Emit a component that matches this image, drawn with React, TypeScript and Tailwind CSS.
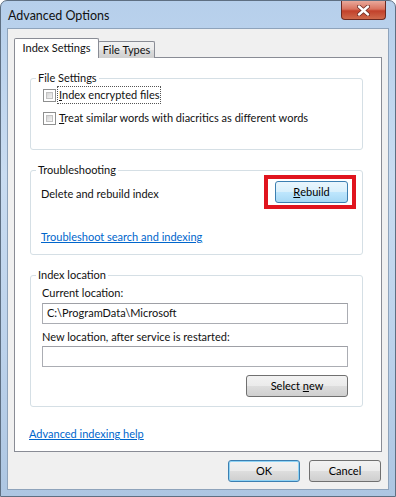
import React from "react";

const font = { fontFamily: 'Lato, "Noto Sans", sans-serif' };

function Checkbox({ label, mnemonic, focused }: { label: string; mnemonic: string; focused?: boolean }) {
  return (
    <div className="flex items-center h-[16px]">
      <div className="w-[13px] h-[13px] border border-[#8e8f8f] bg-white p-[2px] mr-[1px]">
        <div className="w-full h-full border border-[#c2c2c2] bg-[linear-gradient(135deg,#d4d4d4_0%,#f4f4f4_100%)]" />
      </div>
      <span className={focused ? "px-[1px] border border-dotted border-[#555]" : "px-[1px] border border-transparent"}>
        <span className="underline">{mnemonic}</span>
        {label}
      </span>
    </div>
  );
}

function Button({ children, className, variant }: { children: React.ReactNode; className: string; variant?: "hot" | "default" }) {
  let skin =
    "border-[#707070] bg-[linear-gradient(180deg,#f2f2f2_0%,#ebebeb_48%,#dddddd_52%,#cfcfcf_100%)]";
  if (variant === "hot")
    skin = "border-[#3c7fb1] bg-[linear-gradient(180deg,#eaf6fd_0%,#d9f0fc_48%,#bee6fd_52%,#a7d9f5_100%)]";
  if (variant === "default")
    skin = "border-[#3c7fb1] shadow-[inset_0_0_0_1px_#8fd3f5] bg-[linear-gradient(180deg,#f2f2f2_0%,#ebebeb_48%,#dddddd_52%,#cfcfcf_100%)]";
  return (
    <div className={`flex items-center justify-center rounded-[3px] border text-black ${skin} ${className}`}>
      {children}
    </div>
  );
}

function Group({ title, className, children }: { title: string; className: string; children: React.ReactNode }) {
  return (
    <fieldset className={`border border-[#d5dfe5] rounded-[3px] ${className}`}>
      <legend className="ml-[5px] px-[2px] leading-[16px]">{title}</legend>
      {children}
    </fieldset>
  );
}

export default function App() {
  return (
    <div
      style={font}
      className="w-[396px] h-[497px] flex flex-col text-[11px] text-[#111] rounded-t-[7px] border border-[#5e6f82] bg-[linear-gradient(180deg,#b6cfeb_0%,#c9dcf1_35%,#bcd2eb_70%,#adc6e2_100%)]"
    >
      <div className="h-[27px] flex items-start">
        <span className="pl-[7px] pt-[6px] text-[12.5px] leading-[18px]">Advanced Options</span>
        <div className="ml-auto mr-[9px] w-[45px] h-[19px] flex items-center justify-center rounded-b-[4px] border border-t-0 border-[#6b2a22] bg-[linear-gradient(180deg,#e9a99b_0%,#d9735f_45%,#c2412b_55%,#cf6a4c_100%)]">
          <svg width="13" height="11" viewBox="0 0 13 11">
            <path d="M2 1.5 L11 9.5 M11 1.5 L2 9.5" stroke="#6b2a22" strokeWidth="4" strokeLinecap="round" />
            <path d="M2 1.5 L11 9.5 M11 1.5 L2 9.5" stroke="#ffffff" strokeWidth="2.4" strokeLinecap="round" />
          </svg>
        </div>
      </div>

      <div className="mx-[6px] mb-[6px] flex-1 border border-[#8ea3bb] bg-[#f0f0f0] flex flex-col pl-[6px] pr-[6px] pt-[9px]">
        <div className="flex items-end h-[20px] relative z-10 -mb-[1px]">
          <div className="h-[20px] w-[85px] bg-white border border-b-0 border-[#898c95] rounded-t-[2px] flex items-center justify-center">
            Index Settings
          </div>
          <div className="h-[17px] w-[57px] -ml-[1px] border border-[#898c95] border-b-0 rounded-t-[2px] bg-[linear-gradient(180deg,#f2f2f2_0%,#ebebeb_48%,#dddddd_52%,#cfcfcf_100%)] flex items-center justify-center">
            File Types
          </div>
        </div>

        <div className="h-[395px] w-[368px] bg-white border border-[#898c95] flex flex-col pl-[15px] pt-[12px]">
          <Group title="File Settings" className="w-[333px] h-[80px]">
            <div className="pl-[12px] pt-[1px] flex flex-col gap-[7px]">
              <Checkbox mnemonic="I" label="ndex encrypted files" focused />
              <Checkbox mnemonic="T" label="reat similar words with diacritics as different words" />
            </div>
          </Group>

          <Group title="Troubleshooting" className="w-[333px] h-[93px] mt-[12px]">
            <div className="pl-[10px] pr-[6px] flex flex-col">
              <div className="-mt-[3px] h-[34px] flex items-center justify-between">
                <span className="pt-[5px]">Delete and rebuild index</span>
                <div className="w-[92px] h-[34px] border-4 border-[#e0141e] flex items-center pl-[7px]">
                  <Button variant="hot" className="w-[73px] h-[22px]">
                    <span className="underline">R</span>ebuild
                  </Button>
                </div>
              </div>
              <span className="mt-[20px] leading-[16px] text-[#0066cc] underline">Troubleshoot search and indexing</span>
            </div>
          </Group>

          <Group title="Index location" className="w-[333px] h-[140px] mt-[12px]">
            <div className="pl-[11px] flex flex-col">
              <span className="mt-[2px] leading-[16px]">Current location:</span>
              <div className="mt-[2px] w-[306px] h-[21px] border border-[#abadb3] border-t-[#9ea0a6] bg-white flex items-center pl-[4px]">
                C:\ProgramData\Microsoft
              </div>
              <span className="mt-[5px] leading-[16px]">New location, after service is restarted:</span>
              <div className="mt-[1px] w-[306px] h-[21px] border border-[#abadb3] border-t-[#9ea0a6] bg-white" />
              <div className="mt-[8px] w-[306px] flex justify-end">
                <Button className="w-[102px] h-[22px]">
                  Select&nbsp;<span className="underline">n</span>ew
                </Button>
              </div>
            </div>
          </Group>

          <span className="mt-[19px] -ml-[1px] leading-[16px] text-[#0066cc] underline">Advanced indexing help</span>
        </div>

        <div className="flex justify-end gap-[9px] mt-[8px] pr-[1px]">
          <Button variant="default" className="w-[72px] h-[22px]">OK</Button>
          <Button className="w-[72px] h-[22px]">Cancel</Button>
        </div>
      </div>
    </div>
  );
}
